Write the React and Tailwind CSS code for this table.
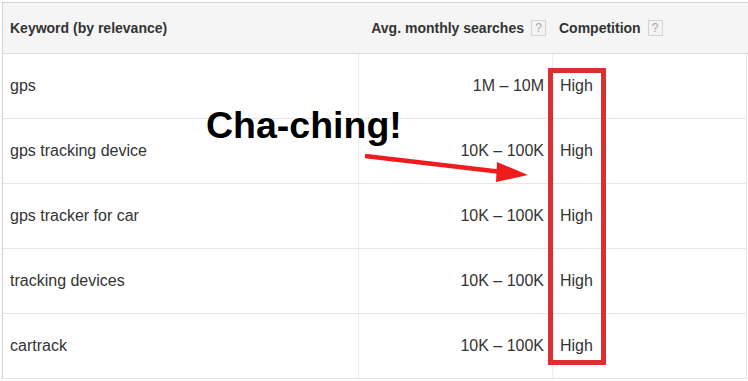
import React from 'react';

const rows = [
  { keyword: 'gps', searches: '1M – 10M', competition: 'High' },
  { keyword: 'gps tracking device', searches: '10K – 100K', competition: 'High' },
  { keyword: 'gps tracker for car', searches: '10K – 100K', competition: 'High' },
  { keyword: 'tracking devices', searches: '10K – 100K', competition: 'High' },
  { keyword: 'cartrack', searches: '10K – 100K', competition: 'High' },
];

function HelpBox() {
  return (
    <span className="ml-[7px] inline-flex h-[16px] w-[15px] items-center justify-center border border-[#d4d4d4] bg-[#f3f3f3] text-[12px] font-normal leading-none text-[#a8a8a8]">
      ?
    </span>
  );
}

export default function App() {
  return (
    <div className="relative h-[381px] w-[748px] overflow-hidden bg-white font-['Liberation_Sans',Arial,sans-serif] text-[#333]">
      <div className="ml-[2px] mt-[2px] w-[746px] border-l border-t border-[#d2d2d2]">
        {/* header */}
        <div className="flex h-[51px] items-center border-b border-[#dcdcdc] bg-[#f5f5f5] text-[14px] font-bold text-[#333]">
          <div className="w-[356px] pl-[7px]">Keyword (by relevance)</div>
          <div className="flex w-[194px] items-center justify-end pr-[7px]">
            Avg. monthly searches
            <HelpBox />
          </div>
          <div className="flex items-center pl-[6px]">
            Competition
            <HelpBox />
          </div>
        </div>

        {/* rows */}
        <div className="w-[744px] border-r border-[#e6e6e6]">
          {rows.map((row) => (
            <div key={row.keyword} className="flex h-[65px] border-b border-[#e6e6e6] text-[16px]">
              <div className="flex w-[356px] items-center border-r border-[#ececec] pl-[7px]">{row.keyword}</div>
              <div className="flex w-[194px] items-center justify-end border-r border-[#ececec] pr-[8px]">
                {row.searches}
              </div>
              <div className="flex items-center pl-[7px]">{row.competition}</div>
            </div>
          ))}
        </div>
      </div>

      {/* annotation */}
      <div className="absolute left-[548px] top-[68px] h-[297px] w-[58px] border-[5px] border-[#d9312f]" />
      <div className="absolute left-[206px] top-[107px] text-[37.5px] font-bold leading-none text-black">
        Cha-ching!
      </div>
      <svg className="absolute left-0 top-0" width="748" height="381" viewBox="0 0 748 381">
        <line x1="365" y1="156" x2="502" y2="172" stroke="#ee1c1c" strokeWidth="4.5" />
        <polygon points="497,162 528,175 496,182" fill="#ee1c1c" />
      </svg>
    </div>
  );
}
